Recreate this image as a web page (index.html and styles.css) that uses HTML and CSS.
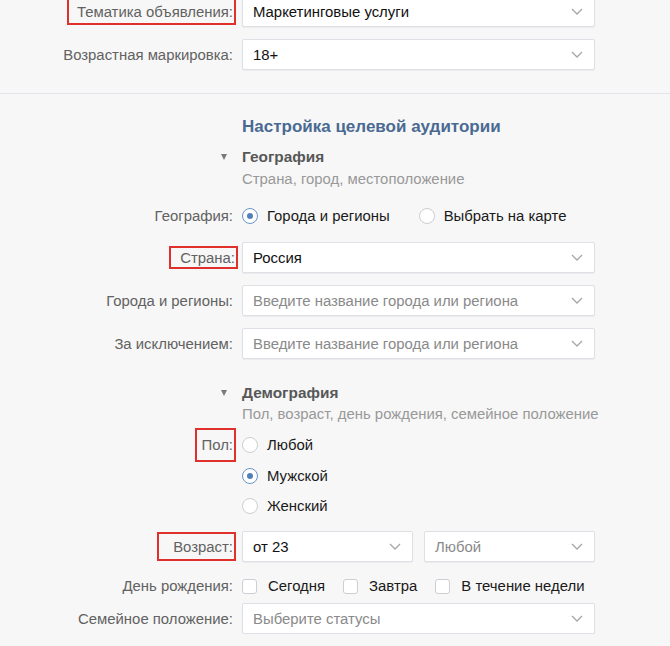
FILE: index.html
```html
<!DOCTYPE html>
<html lang="ru">
<head>
<meta charset="utf-8">
<title>Настройка объявления</title>
<link rel="stylesheet" href="styles.css">
</head>
<body>
<div class="page">
  <div class="row r-first">
    <div class="label"><span class="mark mark-top">Тематика объявления:</span></div>
    <div class="ctl">
      <div class="select"><span class="val">Маркетинговые услуги</span><svg class="chev" viewBox="0 0 12 7"><path d="M1 1 L6 6 L11 1"/></svg></div>
    </div>
  </div>
  <div class="row r-12">
    <div class="label"><span class="plain">Возрастная маркировка:</span></div>
    <div class="ctl">
      <div class="select"><span class="val">18+</span><svg class="chev" viewBox="0 0 12 7"><path d="M1 1 L6 6 L11 1"/></svg></div>
    </div>
  </div>

  <div class="divider"></div>

  <div class="row r-heading">
    <div class="label"></div>
    <div class="ctl"><h2 class="title">Настройка целевой аудитории</h2></div>
  </div>

  <div class="row r-sec1">
    <div class="label"><span class="tri"></span></div>
    <div class="ctl"><h3 class="sec">География</h3></div>
  </div>
  <div class="row r-sub">
    <div class="label"></div>
    <div class="ctl"><div class="sub">Страна, город, местоположение</div></div>
  </div>

  <div class="row r-geo">
    <div class="label"><span class="plain">География:</span></div>
    <div class="ctl options">
      <label class="opt"><span class="radio on"></span><span class="txt">Города и регионы</span></label>
      <label class="opt"><span class="radio"></span><span class="txt">Выбрать на карте</span></label>
    </div>
  </div>

  <div class="row r-16">
    <div class="label"><span class="mark mark-sm">Страна:</span></div>
    <div class="ctl">
      <div class="select"><span class="val">Россия</span><svg class="chev" viewBox="0 0 12 7"><path d="M1 1 L6 6 L11 1"/></svg></div>
    </div>
  </div>
  <div class="row r-12">
    <div class="label"><span class="plain">Города и регионы:</span></div>
    <div class="ctl">
      <div class="select"><span class="ph">Введите название города или региона</span><svg class="chev" viewBox="0 0 12 7"><path d="M1 1 L6 6 L11 1"/></svg></div>
    </div>
  </div>
  <div class="row r-12">
    <div class="label"><span class="plain">За исключением:</span></div>
    <div class="ctl">
      <div class="select"><span class="ph">Введите название города или региона</span><svg class="chev" viewBox="0 0 12 7"><path d="M1 1 L6 6 L11 1"/></svg></div>
    </div>
  </div>

  <div class="row r-sec2">
    <div class="label"><span class="tri"></span></div>
    <div class="ctl"><h3 class="sec">Демография</h3></div>
  </div>
  <div class="row r-sub2">
    <div class="label"></div>
    <div class="ctl"><div class="sub">Пол, возраст, день рождения, семейное положение</div></div>
  </div>

  <div class="row r-pol1 opt-row">
    <div class="label"><span class="mark mark-lg">Пол:</span></div>
    <div class="ctl options">
      <label class="opt"><span class="radio"></span><span class="txt">Любой</span></label>
    </div>
  </div>
  <div class="row r-pol2 opt-row">
    <div class="label"></div>
    <div class="ctl options">
      <label class="opt"><span class="radio on"></span><span class="txt">Мужской</span></label>
    </div>
  </div>
  <div class="row r-pol3 opt-row">
    <div class="label"></div>
    <div class="ctl options">
      <label class="opt"><span class="radio"></span><span class="txt">Женский</span></label>
    </div>
  </div>

  <div class="row r-age">
    <div class="label"><span class="mark mark-md">Возраст:</span></div>
    <div class="ctl pair">
      <div class="select"><span class="val">от 23</span><svg class="chev" viewBox="0 0 12 7"><path d="M1 1 L6 6 L11 1"/></svg></div>
      <div class="select"><span class="ph">Любой</span><svg class="chev" viewBox="0 0 12 7"><path d="M1 1 L6 6 L11 1"/></svg></div>
    </div>
  </div>

  <div class="row r-bday opt-row">
    <div class="label"><span class="plain">День рождения:</span></div>
    <div class="ctl options">
      <label class="opt chk-opt"><span class="check"></span><span class="txt">Сегодня</span></label>
      <label class="opt chk-opt"><span class="check"></span><span class="txt">Завтра</span></label>
      <label class="opt chk-opt"><span class="check"></span><span class="txt">В течение недели</span></label>
    </div>
  </div>

  <div class="row r-fam">
    <div class="label"><span class="plain">Семейное положение:</span></div>
    <div class="ctl">
      <div class="select"><span class="ph">Выберите статусы</span><svg class="chev" viewBox="0 0 12 7"><path d="M1 1 L6 6 L11 1"/></svg></div>
    </div>
  </div>
</div>
</body>
</html>
```

FILE: styles.css
```css
html, body {
  margin: 0;
  padding: 0;
}
body {
  background: #f7f7f7;
  font-family: "Liberation Sans", Arial, sans-serif;
  font-size: 14.9px;
  color: #222;
  overflow: hidden;
}
.page {
  display: flex;
  flex-direction: column;
  width: 670px;
}
.row {
  display: flex;
  align-items: center;
  flex-shrink: 0;
}
.opt-row {
  height: 20px;
}
.opt-row .label {
  height: 20px;
}
.label {
  width: 236px;
  flex-shrink: 0;
  display: flex;
  justify-content: flex-end;
  align-items: center;
  color: #626262;
  white-space: nowrap;
}
.plain {
  padding-right: 3px;
}
.ctl {
  width: 353px;
  margin-left: 6px;
  flex-shrink: 0;
}

/* annotation boxes */
.mark {
  border: 2px solid #e0302c;
  padding: 0 1px 0 6px;
  display: flex;
  align-items: center;
  box-sizing: border-box;
  flex-shrink: 0;
}
.mark-top { height: 27px; padding-left: 8px; }
.mark-sm { height: 23px; padding-left: 9px; margin-right: -2px; }
.mark-lg { height: 34px; padding-left: 5px; }
.mark-md { height: 29px; padding-left: 14px; }

/* selects */
.select {
  height: 31px;
  box-sizing: border-box;
  background: #fff;
  border: 1px solid #dde0e4;
  border-radius: 2px;
  box-shadow: 0 1px 1px rgba(0, 0, 0, 0.05);
  display: flex;
  align-items: center;
  justify-content: space-between;
  padding: 0 11px 0 10px;
  white-space: nowrap;
}
.val { color: #111; }
.ph { color: #8a8a8a; }
.chev {
  width: 12px;
  height: 7px;
  flex-shrink: 0;
  fill: none;
  stroke: #a6a6a6;
  stroke-width: 1.3;
}
.pair {
  display: flex;
  gap: 11px;
}
.pair .select { flex: 1; }

/* headings */
.title {
  margin: 0;
  font-size: 17px;
  line-height: 20px;
  font-weight: bold;
  color: #4a6a92;
}
.sec {
  margin: 0;
  font-size: 15.4px;
  line-height: 20px;
  font-weight: bold;
  color: #575757;
}
.tri {
  width: 0;
  height: 0;
  border-left: 3px solid transparent;
  border-right: 3px solid transparent;
  border-top: 6px solid #7a7a7a;
  margin-right: 9px;
}
.sub {
  line-height: 18px;
  color: #999;
  white-space: nowrap;
}

.divider {
  height: 1px;
  background: #e1e4e8;
  margin-top: 23px;
  flex-shrink: 0;
}

/* options */
.options {
  display: flex;
  align-items: center;
  height: 20px;
}
.opt {
  display: flex;
  align-items: center;
  margin-right: 29px;
  color: #1a1a1a;
  white-space: nowrap;
}
.radio {
  width: 16px;
  height: 16px;
  box-sizing: border-box;
  border: 1px solid #cbced3;
  border-radius: 50%;
  background: #fff;
  display: flex;
  align-items: center;
  justify-content: center;
  flex-shrink: 0;
}
.radio.on { border-color: #6b95c8; }
.radio.on::after {
  content: "";
  width: 6px;
  height: 6px;
  border-radius: 50%;
  background: #5181b8;
}
.txt { margin-left: 9px; }
.check {
  width: 15px;
  height: 15px;
  box-sizing: border-box;
  border: 1px solid #cbced3;
  border-radius: 3px;
  background: #fff;
  flex-shrink: 0;
}
.chk-opt { margin-right: 18px; }
.chk-opt .txt { margin-left: 11px; }

/* vertical rhythm */
.r-first { margin-top: -4px; }
.r-12 { margin-top: 12px; }
.r-16 { margin-top: 16px; }
.r-heading { margin-top: 23px; }
.r-sec1 { margin-top: 10px; }
.r-sub { margin-top: 3px; }
.r-geo { margin-top: 18px; }
.r-sec2 { margin-top: 24px; }
.r-sub2 { margin-top: 2px; }
.r-pol1 { margin-top: 12px; }
.r-pol2 { margin-top: 11px; }
.r-pol3 { margin-top: 10px; }
.r-age { margin-top: 15px; }
.r-bday { margin-top: 14px; }
.r-fam { margin-top: 7px; }
```
